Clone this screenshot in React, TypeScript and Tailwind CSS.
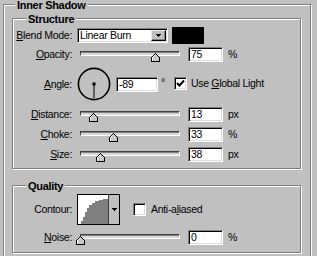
import type { ReactNode } from "react";

const sunken =
  "border border-t-[#808080] border-l-[#808080] border-b-white border-r-white shadow-[inset_1px_1px_0_#000,inset_-1px_-1px_0_#dcdcdc]";
const raised =
  "border border-t-[#e8e8e8] border-l-[#e8e8e8] border-b-black border-r-black shadow-[inset_-1px_-1px_0_#808080]";

function Group({ title, ml, className, children }: { title: string; ml: string; className?: string; children: ReactNode }) {
  return (
    <fieldset
      className={`border border-[#808080] shadow-[inset_1px_1px_0_#fff,1px_1px_0_#fff] ${className ?? ""}`}
    >
      <legend className={`${ml} px-[2px] bg-[#c0c0c0] text-[11px] leading-[9px] font-bold text-black`}>
        <span className="relative top-[1px]">{title}</span>
      </legend>
      {children}
    </fieldset>
  );
}

function Label({ children }: { children: ReactNode }) {
  return <div className="w-[59px] shrink-0 text-right whitespace-nowrap">{children}</div>;
}

function U({ children }: { children: ReactNode }) {
  return <span className="underline underline-offset-[1px] decoration-1">{children}</span>;
}

function Thumb({ left }: { left: number }) {
  return (
    <svg className="absolute top-[6px]" style={{ left }} width="9" height="9" viewBox="0 0 9 9" shapeRendering="crispEdges">
      <polygon points="0.5,4.5 4.5,0.5 8.5,4.5 8.5,8.5 0.5,8.5" fill="#c8c8c8" stroke="#000" strokeWidth="1" />
      <path d="M1.5,7.5 V4.8 L4.5,1.8" fill="none" stroke="#fff" strokeWidth="1" />
    </svg>
  );
}

function Slider({ center }: { center: number }) {
  return (
    <div className="relative ml-[6px] w-[104px] h-[15px] shrink-0">
      <div className="ml-[2px] mt-[4px] w-[100px] h-[5px] border border-t-[#404040] border-l-[#404040] border-b-white border-r-white bg-[#d8d8d8] shadow-[inset_0_1px_0_#808080]" />
      <Thumb left={center - 4 - 78} />
    </div>
  );
}

function NumBox({ value, w = "w-[35px]", ml = "ml-[6px]" }: { value: string; w?: string; ml?: string }) {
  return (
    <div className={`${ml} ${w} h-[15px] shrink-0 bg-white ${sunken} pl-[2px] flex items-center`}>{value}</div>
  );
}

function Check({ checked }: { checked: boolean }) {
  return (
    <div className={`w-[13px] h-[13px] shrink-0 bg-white ${sunken} flex items-center justify-center`}>
      {checked && (
        <svg width="9" height="9" viewBox="0 0 9 9">
          <polyline points="1,4 3.5,6.5 8,1.5" fill="none" stroke="#000" strokeWidth="2" />
        </svg>
      )}
    </div>
  );
}

function Arrow() {
  return (
    <svg width="5" height="3" viewBox="0 0 5 3" shapeRendering="crispEdges">
      <polygon points="0,0 5,0 2.5,3" fill="#000" />
    </svg>
  );
}

function SliderRow({ label, center, value, unit, mt }: { label: ReactNode; center: number; value: string; unit: string; mt: string }) {
  return (
    <div className={`${mt} h-[15px] flex items-center`}>
      <Label>{label}</Label>
      <Slider center={center} />
      <NumBox value={value} />
      <span className="ml-[5px]">{unit}</span>
    </div>
  );
}

export default function App() {
  return (
    <div className="w-[317px] h-[256px] overflow-hidden bg-[#c0c0c0] text-black font-['Liberation_Sans',Arial,sans-serif] text-[10.5px] tracking-[-0.3px] leading-[13px]">
      <Group title="Inner Shadow" ml="ml-[11px]" className="ml-[3px] w-[308px] pb-[30px]">
        {/* Structure */}
        <Group title="Structure" ml="ml-[13px]" className="ml-[8px] mt-[5px] w-[289px] pb-[6px]">
          <div className="mt-[4px] h-[17px] flex items-center">
            <Label>
              <U>B</U>lend Mode:
            </Label>
            <div className={`ml-[5px] w-[91px] h-[15px] bg-white ${sunken} flex items-center`}>
              <span className="flex-1 pl-[2px]">Linear Burn</span>
              <div className={`mr-[1px] w-[15px] h-[11px] bg-[#c0c0c0] ${raised} flex items-center justify-center`}>
                <Arrow />
              </div>
            </div>
            <div className="ml-[4px] w-[32px] h-[17px] bg-black" />
          </div>

          <SliderRow label={<><U>O</U>pacity:</>} center={155} value="75" unit="%" mt="mt-[3px]" />

          <div className="mt-[5px] h-[34px] flex items-center">
            <Label>
              <U>A</U>ngle:
            </Label>
            <svg className="ml-[5px] shrink-0" width="34" height="34" viewBox="0 0 34 34">
              <circle cx="17" cy="17" r="15.6" fill="none" stroke="#000" strokeWidth="1.6" />
              <rect x="15.5" y="15.5" width="3" height="3" fill="#000" />
              <line x1="17" y1="17" x2="17" y2="31" stroke="#000" strokeWidth="1" />
            </svg>
            <NumBox value="-89" w="w-[42px]" ml="ml-[5px]" />
            <span className="ml-[3px] self-start mt-[9px]">°</span>
            <div className="ml-[9px] -mt-[2px]">
              <Check checked />
            </div>
            <span className="ml-[4px] -mt-[2px]">
              Use <U>G</U>lobal Light
            </span>
          </div>

          <SliderRow label={<><U>D</U>istance:</>} center={93} value="13" unit="px" mt="mt-[6px]" />
          <SliderRow label={<><U>C</U>hoke:</>} center={113} value="33" unit="%" mt="mt-[5px]" />
          <SliderRow label={<><U>S</U>ize:</>} center={100} value="38" unit="px" mt="mt-[5px]" />
        </Group>

        {/* Quality */}
        <Group title="Quality" ml="ml-[13px]" className="ml-[8px] mt-[12px] w-[289px] pb-[7px]">
          <div className="mt-[4px] h-[31px] flex items-center">
            <Label>Contour:</Label>
            <div className="ml-[5px] w-[43px] h-[31px] border border-black flex">
              <svg width="30" height="29" viewBox="0 0 30 29" shapeRendering="crispEdges" className="shrink-0 bg-white">
                <polygon
                  points="3,29 3,26 5,26 5,22 7,22 7,17 9,17 9,13 11,13 11,10 14,10 14,8 17,8 17,6 21,6 21,5 25,5 25,4 30,4 30,29"
                  fill="#808080"
                />
              </svg>
              <div className="flex-1 bg-[#c0c0c0] border-l border-[#404040] flex items-center justify-center">
                <Arrow />
              </div>
            </div>
            <div className="ml-[13px]">
              <Check checked={false} />
            </div>
            <span className="ml-[5px]">
              Anti-a<U>l</U>iased
            </span>
          </div>

          <SliderRow label={<><U>N</U>oise:</>} center={80} value="0" unit="%" mt="mt-[5px]" />
        </Group>
      </Group>
    </div>
  );
}
